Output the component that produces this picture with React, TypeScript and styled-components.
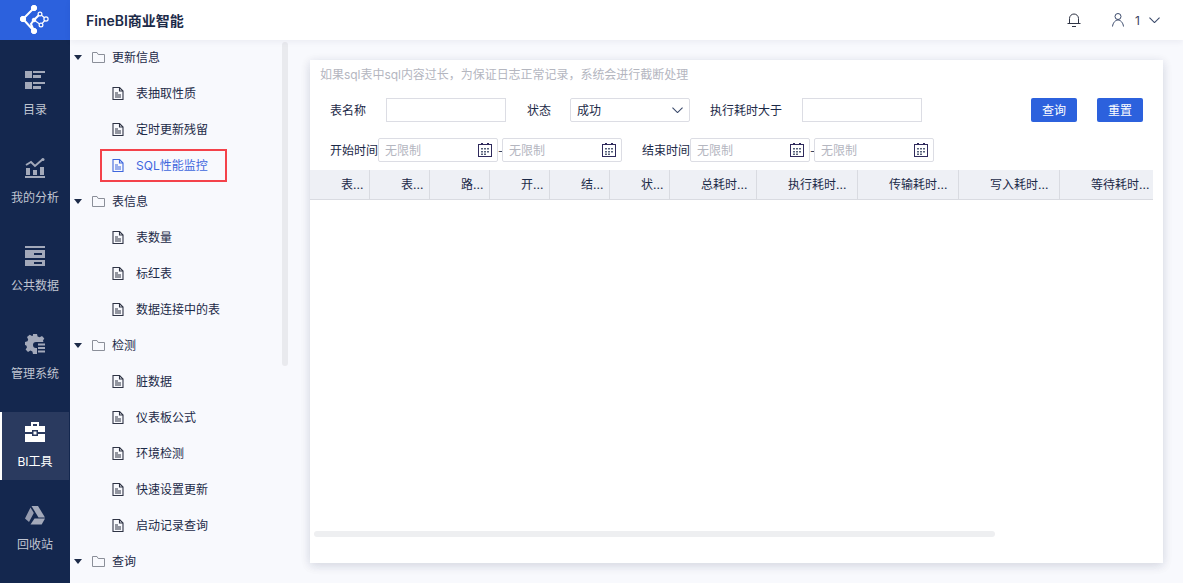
import React from "react";
import styled, { createGlobalStyle } from "styled-components";

const Global = createGlobalStyle`
  html, body { margin: 0; padding: 0; width: 1183px; height: 583px; overflow: hidden; background: #f8f9fd; }
  * { box-sizing: border-box; }
  body { font-family: Inter, "Noto Sans CJK SC", sans-serif; font-size: 12px; color: #1c2a48; }
`;

const Page = styled.div`display: flex; width: 1183px; height: 583px; overflow: hidden;`;
const Rail = styled.nav`width: 70px; flex: none; background: #14274e; display: flex; flex-direction: column; overflow: hidden;`;
const Logo = styled.div`height: 40px; flex: none; background: #2c61dd; display: flex; align-items: center; justify-content: center; margin-bottom: 20px;`;
const RailItem = styled.div<{ $active?: boolean; $tail?: boolean }>`
  height: 68px; flex: none; display: flex; flex-direction: column; align-items: center; padding-top: 10px;
  margin-bottom: ${p => (p.$tail ? 16 : 20)}px;
  color: ${p => (p.$active ? "#ffffff" : "#c0c5d1")};
  background: ${p => (p.$active ? "#2a3a5f" : "transparent")};
  border-left: ${p => (p.$active ? "2px solid #fff" : "0")};
  margin-right: ${p => (p.$active ? "1px" : "0")};
  padding-right: ${p => (p.$active ? "1px" : "0")};
`;
const RailLabel = styled.span`margin-top: 10px; line-height: 20px; height: 20px; font-size: 12px;`;

const Main = styled.div`flex: 1; min-width: 0; display: flex; flex-direction: column;`;
const Header = styled.header`
  height: 40px; flex: none; background: #fff; display: flex; align-items: center; padding-left: 16px;
  box-shadow: 0 2px 6px rgba(30,40,80,.06); position: relative; z-index: 2;
`;
const Title = styled.div`font-size: 14px; font-weight: 600; color: #1c2a48; flex: 1;`;
const HeaderIcons = styled.div`display: flex; align-items: center; padding-right: 23px;`;
const UserNum = styled.span`margin: 0 9px 0 11px; font-size: 12px; color: #3a4560;`;

const Body = styled.div`flex: 1; display: flex; min-height: 0;`;
const Tree = styled.div`width: 218px; flex: none; position: relative; overflow: hidden; margin-top: -1px;`;
const Thumb = styled.div`position: absolute; left: 212px; top: 3px; width: 6px; height: 324px; border-radius: 3px; background: #e9eaee;`;
const Highlight = styled.div`position: absolute; left: 30px; top: 110px; width: 127px; height: 33px; border: 2px solid #f4424a; pointer-events: none;`;
const GroupRow = styled.div`height: 36px; display: flex; align-items: center; padding-left: 4px; color: #1c2a48;`;
const GroupLabel = styled.span`margin-left: 7px; padding-bottom: 2px;`;
const LeafRow = styled.div<{ $active?: boolean }>`
  height: 36px; display: flex; align-items: center; padding-left: 42px;
  color: ${p => (p.$active ? "#3f67dd" : "#1c2a48")};
`;
const LeafLabel = styled.span`margin-left: 12px; padding-bottom: 2px;`;

const Content = styled.main`flex: 1; padding: 20px 20px 20px 22px; min-width: 0;`;
const Card = styled.section`
  height: 100%; background: #fff; position: relative; overflow: hidden;
  box-shadow: 0 2px 10px rgba(30,40,80,.1);
`;
const CardWrap = styled.div`height: 100%; box-shadow: 0 3px 10px rgba(30,40,80,.08);`;
const Hint = styled.div`height: 30px; line-height: 30px; padding-left: 10px; color: #b4b6bf; font-size: 12px; letter-spacing: -0.03px;`;
const FilterRow = styled.div<{ $mt: number }>`display: flex; align-items: center; height: 24px; margin-top: ${p => p.$mt}px; padding: 0 20px;`;
const Label = styled.span<{ $w: number; $ml?: number }>`flex: none; width: ${p => p.$w}px; margin-left: ${p => p.$ml ?? 0}px; padding-bottom: 2px; color: #1c2a48; white-space: nowrap;`;
const Box = styled.div`width: 120px; height: 24px; flex: none; border: 1px solid #dcdde4; background: #fff;`;
const SelectBox = styled(Box)`display: flex; align-items: center; justify-content: space-between; padding: 0 6px 0 6px; border-radius: 2px; color: #1c2a48;`;
const DateBox = styled(Box)`display: flex; align-items: center; justify-content: space-between; padding: 0 5px 0 6px; border-radius: 2px; color: #b4b6bf;`;
const Value = styled.span`padding-bottom: 2px;`;
const Dash = styled.span`width: 4px; text-align: center; flex: none; color: #3a4560;`;
const Buttons = styled.div`margin-left: auto; display: flex; gap: 20px;`;
const Button = styled.button`
  width: 46px; height: 24px; border: 0; border-radius: 2px; background: #2c61dd; color: #fff;
  font: inherit; padding: 0 0 2px;
`;
const TableHead = styled.div`display: flex; width: 843px; height: 30px; margin-top: 8px; background: #eef0f5; border-bottom: 1px solid #d9dbe1;`;
const HeadCell = styled.div<{ $w: number }>`
  flex: none; width: ${p => p.$w}px; padding-left: 31px; line-height: 29px;
  border-right: 1px solid #d9dbe1; white-space: nowrap; color: #1c2a48;
  &:last-child { border-right: 0; }
`;
const HScroll = styled.div`position: absolute; left: 4px; top: 471px; width: 681px; height: 6px; border-radius: 3px; background: #eeeff1;`;

const Doc = ({ c = "#2f3445" }: { c?: string }) => (
  <svg width="12" height="13" viewBox="0 0 12 13" fill="none" stroke={c} strokeWidth="1.100">
    <path d="M1 .5h6.500l3.500 3.500v8.500H1z" />
    <path d="M7.500.5V4H11" />
    <path d="M3 6h3M3 8h6M3 10h6" />
  </svg>
);
const Arrow = () => (
  <svg width="8" height="5" viewBox="0 0 8 5"><path d="M0 0h8L4 5z" fill="#1c2a48" /></svg>
);
const Folder = () => (
  <svg width="13" height="11" viewBox="0 0 13 11" fill="none" stroke="#8b8f99" strokeWidth="1" style={{ marginLeft: 10 }}>
    <path d="M.5.500h4.500l1.200 2h6.300v8h-12z" />
  </svg>
);
const Calendar = () => (
  <svg width="14" height="14" viewBox="0 0 14 14" fill="none">
    <rect x=".5" y="1.500" width="13" height="12" stroke="#2f2a5c" />
    <path d="M3 0h2v2H3zM9 0h2v2H9z" fill="#2f2a5c" />
    <path d="M3 5h2v1.500H3zM6 5h2v1.500H6zM9 5h2v1.500H9zM3 8h2v1.500H3zM6 8h2v1.500H6zM9 8h2v1.500H9zM6 10.500h2V12H6zM3 10.500h2V12H3z" fill="#56617a" />
  </svg>
);
const Chevron = ({ w = 11, c = "#3b4a6b" }: { w?: number; c?: string }) => (
  <svg width={w} height={w * 0.6} viewBox="0 0 12 7" fill="none" stroke={c} strokeWidth="1.200"><path d="M.5.500 6 6 11.500.5" /></svg>
);

const LogoMark = () => (
  <svg width="30" height="30" viewBox="0 0 30 30" fill="none" stroke="#fff">
    <path d="M3 14 14 3M3 14l11 12M14 26l-3-7 3-4 6-6" strokeWidth="2" />
    <path d="M20 9l6 5-5 6-7-5" strokeWidth="1.200" />
    <circle cx="14" cy="3" r="2.700" fill="#fff" />
    <circle cx="3" cy="14" r="2.700" fill="#fff" />
    <circle cx="14" cy="26" r="2.700" fill="#fff" />
    <circle cx="14" cy="15" r="1.800" fill="#fff" />
    <circle cx="20" cy="9" r="1.900" fill="#2c61dd" strokeWidth="1.200" />
    <circle cx="26" cy="14" r="2.100" fill="#2c61dd" strokeWidth="1.200" />
    <circle cx="21" cy="20" r="1.900" fill="#2c61dd" strokeWidth="1.200" />
  </svg>
);
const ICON = "#a3a9ba";
const IconCatalog = () => (
  <svg width="20" height="20" viewBox="0 0 20 20" fill={ICON}>
    <path d="M0 1h7v7H0zM8 1h12v2H8zM8 5h8v3H8zM0 12h7v7H0zM8 12h12v2H8zM8 16h8v3H8z" />
  </svg>
);
const IconAnalysis = () => (
  <svg width="20" height="20" viewBox="0 0 20 20" fill="none">
    <path d="M0 18h20v2H0zM1 10h4v7H1zM8 12h4v5H8zM15 9h4v8h-4z" fill={ICON} />
    <path d="M1 7l5-3 4 4 8-7" stroke={ICON} strokeWidth="2" />
    <circle cx="18" cy="1.500" r="1.500" fill={ICON} />
  </svg>
);
const IconData = () => (
  <svg width="20" height="20" viewBox="0 0 20 20">
    <path fillRule="evenodd" fill={ICON} d="M0 0h20v2H0zM0 4h20v8H0zM9 7v2h8V7zM0 14h20v6H0zM9 16v2h8v-2z" />
  </svg>
);
const IconGear = () => (
  <svg width="20" height="20" viewBox="0 0 20 20">
    <path fill={ICON} d="M8 0h4l.6 2.400 2 .8L17 2l2.300 2.400L18 6.500 18.400 8H11a3 3 0 1 0 0 6h1v6H8l-.6-2.600-2-.8L3 18 .6 15.600 2 13.200l-.7-1.800L0 11V8l2.500-.8.700-1.800L2 3l2.700-2.200L7 2l1-.4z" />
    <path fill={ICON} d="M13 9.500h7v2h-7zM13 13h7v2h-7zM13 16.500h7v2h-7z" />
  </svg>
);
const IconTool = () => (
  <svg width="20" height="20" viewBox="0 0 20 20">
    <path fill="#fff" fillRule="evenodd" d="M6 0h8v4h6v6h-7V8H7v2H0V4h6zM8 2v2h4V2zM0 12h7v2h6v-2h7v8H0zM8.500 9.500h3v3h-3z" />
  </svg>
);
const IconTrash = () => (
  <svg width="20" height="19" viewBox="0 0 20 19" fill={ICON}>
    <path d="M6.500 0h6.500l7 11.500h-6.500z" />
    <path d="M5.500 1.500 8.800 7 4 16 0 12.500z" opacity=".9" />
    <path d="M9.500 12.500H20l-3.300 6H5.500z" />
  </svg>
);
const Bell = () => (
  <svg width="14" height="14" viewBox="0 0 14 14" fill="none" stroke="#2f3445" strokeWidth="1">
    <path d="M2.500 10.500V5.500a4.500 4.500 0 0 1 9 0v5M.5 10.500h13M5 13.500h4" />
  </svg>
);
const User = () => (
  <svg width="12" height="14" viewBox="0 0 12 14" fill="none" stroke="#3b4a6b" strokeWidth="1" style={{ marginLeft: 31 }}>
    <circle cx="6" cy="3.500" r="3" />
    <path d="M.5 13.500C1 9.500 3.500 7 6 7s5 2.500 5.500 6.500" />
  </svg>
);

const rail = [
  { label: "目录", icon: <IconCatalog /> },
  { label: "我的分析", icon: <IconAnalysis /> },
  { label: "公共数据", icon: <IconData /> },
  { label: "管理系统", icon: <IconGear /> },
  { label: "BI工具", icon: <IconTool />, active: true, tail: true },
  { label: "回收站", icon: <IconTrash /> },
];
const tree = [
  { group: "更新信息", items: ["表抽取性质", "定时更新残留", "SQL性能监控"] },
  { group: "表信息", items: ["表数量", "标红表", "数据连接中的表"] },
  { group: "检测", items: ["脏数据", "仪表板公式", "环境检测", "快速设置更新", "启动记录查询"] },
  { group: "查询", items: [] as string[] },
];
const cols: [string, number][] = [
  ["表...", 60], ["表...", 60], ["路...", 60], ["开...", 60], ["结...", 60], ["状...", 60],
  ["总耗时...", 87], ["执行耗时...", 101], ["传输耗时...", 101], ["写入耗时...", 101], ["等待耗时...", 93],
];

const DateField = () => (
  <DateBox><Value>无限制</Value><Calendar /></DateBox>
);

export default function App() {
  return (
    <Page>
      <Global />
      <Rail>
        <Logo><LogoMark /></Logo>
        {rail.map(r => (
          <RailItem key={r.label} $active={r.active} $tail={r.tail}>
            {r.icon}
            <RailLabel>{r.label}</RailLabel>
          </RailItem>
        ))}
      </Rail>
      <Main>
        <Header>
          <Title>FineBI商业智能</Title>
          <HeaderIcons>
            <Bell />
            <User />
            <UserNum>1</UserNum>
            <Chevron />
          </HeaderIcons>
        </Header>
        <Body>
          <Tree>
            {tree.map(g => (
              <React.Fragment key={g.group}>
                <GroupRow><Arrow /><Folder /><GroupLabel>{g.group}</GroupLabel></GroupRow>
                {g.items.map(i => (
                  <LeafRow key={i} $active={i.startsWith("SQL")}>
                    <Doc c={i.startsWith("SQL") ? "#3f67dd" : undefined} />
                    <LeafLabel>{i}</LeafLabel>
                  </LeafRow>
                ))}
              </React.Fragment>
            ))}
            <Thumb />
            <Highlight />
          </Tree>
          <Content>
            <CardWrap>
              <Card>
                <Hint>如果sql表中sql内容过长，为保证日志正常记录，系统会进行截断处理</Hint>
                <FilterRow $mt={8}>
                  <Label $w={56}>表名称</Label>
                  <Box />
                  <Label $w={43} $ml={21}>状态</Label>
                  <SelectBox><Value>成功</Value><Chevron /></SelectBox>
                  <Label $w={92} $ml={20}>执行耗时大于</Label>
                  <Box />
                  <Buttons>
                    <Button>查询</Button>
                    <Button>重置</Button>
                  </Buttons>
                </FilterRow>
                <FilterRow $mt={16}>
                  <Label $w={48}>开始时间</Label>
                  <DateField />
                  <Dash>-</Dash>
                  <DateField />
                  <Label $w={48} $ml={20}>结束时间</Label>
                  <DateField />
                  <Dash>-</Dash>
                  <DateField />
                </FilterRow>
                <TableHead>
                  {cols.map(([t, w], i) => <HeadCell key={i} $w={w}>{t}</HeadCell>)}
                </TableHead>
                <HScroll />
              </Card>
            </CardWrap>
          </Content>
        </Body>
      </Main>
    </Page>
  );
}
